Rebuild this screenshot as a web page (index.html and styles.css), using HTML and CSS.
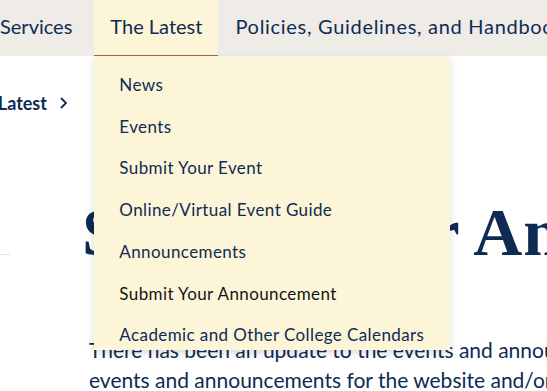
FILE: index.html
```html
<!DOCTYPE html>
<html>
<head>
    <title>The Latest</title>
    <link rel="stylesheet" href="styles.css">
</head>
<body>
    <div class="page">
        <div class="nav">
            <div class="nav-item first">Services</div>
            <div class="nav-item active">
                The Latest
                <div class="dropdown">
                    <a class="dropdown-link">News</a>
                    <a class="dropdown-link">Events</a>
                    <a class="dropdown-link">Submit Your Event</a>
                    <a class="dropdown-link">Online/Virtual Event Guide</a>
                    <a class="dropdown-link">Announcements</a>
                    <a class="dropdown-link hover">Submit Your Announcement</a>
                    <a class="dropdown-link">Academic and Other College Calendars</a>
                </div>
            </div>
            <div class="nav-item policies">Policies, Guidelines, and Handbooks</div>
        </div>

        <div class="breadcrumb">
            <span>The Latest</span>
            <svg class="chevron" width="9" height="14" viewBox="0 0 9 14"><path d="M2 2 L7 7 L2 12" fill="none" stroke="#0e2b54" stroke-width="1.8"/></svg>
        </div>

        <div class="main">
            <div class="side-line"></div>
            <div class="content">
                <h1 class="title">Submit Your Announcement</h1>
                <p class="intro">There has been an update to the events and announcements submission process. To submit events and announcements for the website and/or newsletter, please use the forms below.</p>
            </div>
        </div>
    </div>
</body>
</html>
```

FILE: styles.css
```css
body {
    margin: 0;
    padding: 0;
    background-color: #fff;
    color: #0e2b54;
    font-family: Lato, "Open Sans", sans-serif;
    overflow: hidden;
}
.page {
    width: 547px;
    height: 391px;
    overflow: hidden;
}
.nav {
    display: flex;
    height: 56px;
    background-color: #efebe7;
    white-space: nowrap;
}
.nav-item {
    position: relative;
    padding: 0 19px 0 19px;
    font-size: 20px;
    line-height: 52px;
    color: #0e2b54;
}
.nav-item.first {
    margin-left: -19px;
    padding-right: 22px;
}
.nav-item.active {
    padding: 0 16px;
    background-color: #fdf5d8;
    height: 55px;
    border-bottom: 1px solid #a8692e;
}
.nav-item.policies {
    padding-left: 17px;
    letter-spacing: 0.7px;
}
.dropdown {
    position: absolute;
    top: 57px;
    left: 0;
    width: 356px;
    height: 293px;
    box-sizing: border-box;
    padding: 7px 0 0 25px;
    background-color: #fdf5d8;
    box-shadow: 0 3px 8px rgba(0,0,0,0.15);
    display: flex;
    flex-direction: column;
    z-index: 5;
    letter-spacing: 0;
}
.dropdown-link {
    font-size: 17px;
    letter-spacing: 0.4px;
    line-height: 41.7px;
    color: #0e2b54;
}
.dropdown-link.hover {
    color: #141414;
}
.breadcrumb {
    display: flex;
    align-items: center;
    gap: 12px;
    margin-left: -37px;
    margin-top: 36px;
    font-size: 18px;
    font-weight: 700;
    color: #0e2b54;
}
.main {
    display: flex;
}
.side-line {
    flex-shrink: 0;
    width: 10px;
    height: 1px;
    margin-top: 140px;
    background-color: #e3e3e3;
}
.content {
    margin-left: 72px;
    white-space: nowrap;
}
.title {
    margin: 83px 0 0 0;
    font-family: "Liberation Serif", serif;
    font-size: 68px;
    font-weight: 700;
    letter-spacing: 0.8px;
    line-height: 70px;
    color: #0e2b54;
}
.intro {
    margin: 68px 0 0 7px;
    font-size: 21px;
    line-height: 30px;
    white-space: normal;
    width: 860px;
}
```
